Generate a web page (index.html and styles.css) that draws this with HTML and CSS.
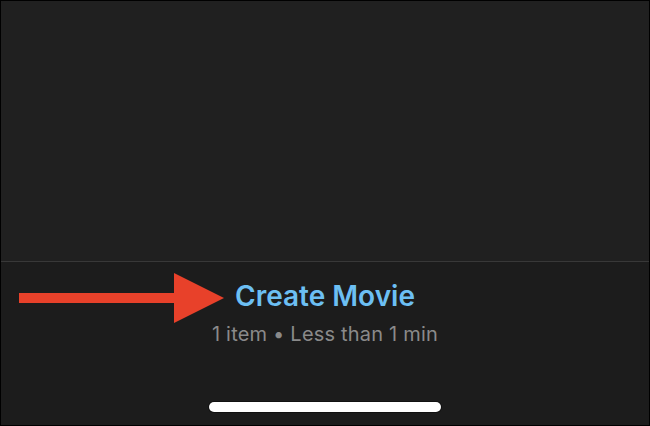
FILE: index.html
```html
<!DOCTYPE html>
<html>
<head>
<meta charset="utf-8">
<link rel="stylesheet" href="styles.css">
</head>
<body>
<div class="screen">
  <div class="preview"></div>
  <div class="toolbar">
    <div class="title">Create Movie</div>
    <div class="meta">1 item • Less than 1 min</div>
    <div class="home-bar"></div>
    <svg class="arrow" width="210" height="52" viewBox="0 0 210 52">
      <rect x="0" y="20" width="157" height="10" fill="#e8412a"/>
      <polygon points="155,0 205,25 155,50" fill="#e8412a"/>
    </svg>
  </div>
</div>
</body>
</html>
```
FILE: styles.css
```css
html, body {
  margin: 0;
  padding: 0;
  background: #000;
}
.screen {
  width: 650px;
  height: 426px;
  box-sizing: border-box;
  border: 1px solid #000;
  display: flex;
  flex-direction: column;
  background: #1c1c1c;
  font-family: Inter, "Noto Sans", sans-serif;
}
.preview {
  height: 260px;
  background: #202020;
  border-bottom: 1px solid #383838;
  flex: none;
}
.toolbar {
  position: relative;
  flex: 1;
  display: flex;
  flex-direction: column;
  align-items: center;
  background: #1c1c1c;
}
.title {
  margin-top: 17px;
  font-size: 28px;
  font-weight: 600;
  line-height: 34px;
  color: #6cbff3;
  letter-spacing: 0;
}
.meta {
  margin-top: 8px;
  font-size: 20px;
  line-height: 26px;
  color: #8a8a8a;
  letter-spacing: 0.2px;
}
.home-bar {
  margin-top: auto;
  margin-bottom: 13px;
  width: 232px;
  height: 10px;
  border-radius: 5px;
  background: #fff;
  box-shadow: 0 0 0 1px #111;
}
.arrow {
  position: absolute;
  left: 18px;
  top: 11px;
}
```
